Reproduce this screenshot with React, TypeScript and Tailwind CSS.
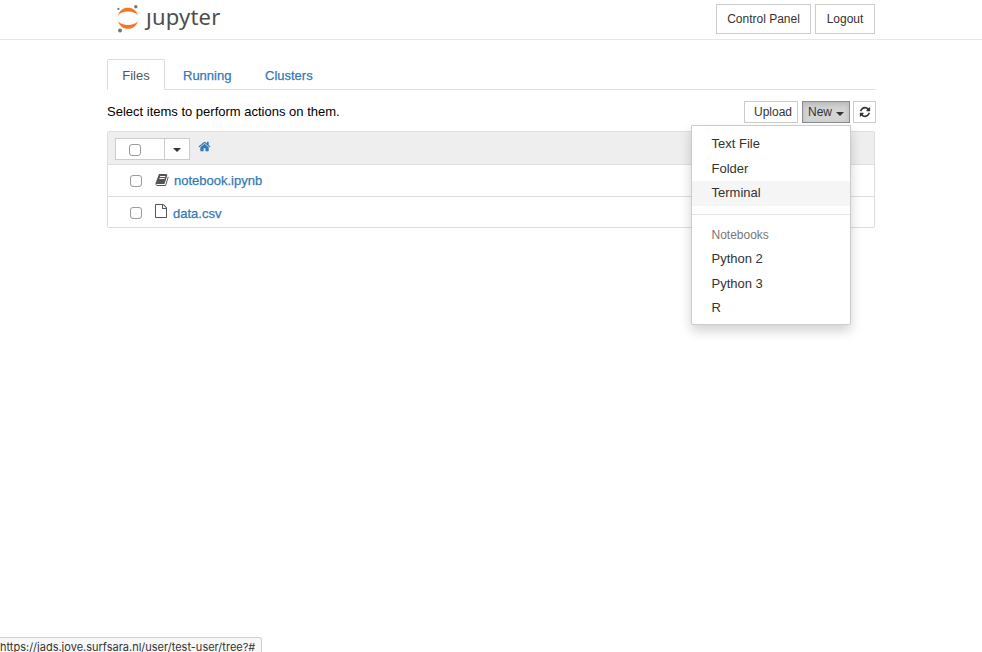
import type { ReactNode } from "react";

const REFRESH =
  "M1639 1056q0 5-1 7-64 268-268 434.5t-478 166.5q-146 0-282.5-55t-243.5-157l-129 129q-19 19-45 19t-45-19-19-45v-448q0-26 19-45t45-19h448q26 0 45 19t19 45-19 45l-137 137q71 66 161 102t187 36q134 0 250-65t186-179q11-17 53-117 8-23 30-23h192q13 0 22.5 9.5t9.5 22.5zm25-800v448q0 26-19 45t-45 19h-448q-26 0-45-19t-19-45 19-45l138-138q-148-137-349-137-134 0-250 65t-186 179q-11 17-53 117-8 23-30 23h-199q-13 0-22.5-9.5t-9.5-22.5v-7q65-268 270-434.5t480-166.5q146 0 284 55.5t245 156.5l130-129q19-19 45-19t45 19 19 45z";
const HOME =
  "M1472 992v480q0 26-19 45t-45 19h-384v-384h-256v384h-384q-26 0-45-19t-19-45v-480q0-1 .5-3t.5-3l575-474 575 474q1 2 1 6zm223-69l-62 74q-8 9-21 11h-3q-13 0-21-7l-692-577-692 577q-12 8-24 7-13-2-21-11l-62-74q-8-10-7-23.5t11-21.5l719-599q32-26 76-26t76 26l244 204v-195q0-14 9-23t23-9h192q14 0 23 9t9 23v408l219 182q10 8 11 21.5t-7 23.5z";
const BOOK =
  "M1703 478q40 57 18 129l-275 906q-19 64-76.5 107.5t-122.5 43.5h-923q-77 0-148.5-53.5t-99.5-131.5q-24-67-2-127 0-4 3-27t4-37q1-8-3-21.5t-3-19.5q2-11 8-21t16.5-23.5 16.5-23.5q23-38 45-91.5t30-91.5q3-10 .5-30t-.5-28q3-11 17-28t17-23q21-36 42-92t25-90q1-9-2.5-32t.5-28q4-13 22-30.5t22-22.5q19-26 42.5-84.5t27.5-96.5q1-8-3-25.5t-2-26.5q2-8 9-18t18-23 17-21q8-12 16.5-30.5t15-35 16-36 19.5-32 26.5-23.5 36-11.5 47.5 5.5l-1 3q38-9 51-9h761q74 0 114 56t18 130l-274 906q-36 119-71.5 153.5t-128.5 34.5h-869q-27 0-38 15-11 16-1 43 24 70 144 70h923q29 0 56-15.5t35-41.5l300-987q7-22 5-57 38 15 59 43zm-1064 2q-4 13 2 22.5t20 9.5h608q13 0 25.5-9.5t16.5-22.5l21-64q4-13-2-22.5t-20-9.5h-608q-13 0-25.5 9.5t-16.5 22.5zm-83 256q-4 13 2 22.5t20 9.5h608q13 0 25.5-9.5t16.5-22.5l21-64q4-13-2-22.5t-20-9.5h-608q-13 0-25.5 9.5t-16.5 22.5z";
const FILE =
  "M1596 380q28 28 48 76t20 88v1152q0 40-28 68t-68 28h-1344q-40 0-68-28t-28-68v-1600q0-40 28-68t68-28h896q40 0 88 20t76 48zm-444-244v376h376q-10-29-22-41l-313-313q-12-12-41-22zm384 1528v-1024h-416q-40 0-68-28t-28-68v-416h-768v1536h1280z";

function Icon({ path, className }: { path: string; className: string }) {
  return (
    <svg viewBox="0 0 1792 1792" fill="currentColor" className={className}>
      <path d={path} />
    </svg>
  );
}

function Caret({ className = "" }: { className?: string }) {
  return (
    <span
      className={`inline-block h-0 w-0 border-x-4 border-t-4 border-x-transparent border-t-[#333] ${className}`}
    />
  );
}

function Check({ className = "" }: { className?: string }) {
  return (
    <input
      type="checkbox"
      className={`block h-[12px] w-[12px] shrink-0 appearance-none rounded-[3px] border border-[#9a9a9a] bg-white ${className}`}
    />
  );
}

function Logo() {
  return (
    <div className="flex h-[39px] items-start pl-[9px]">
      <svg viewBox="0 0 24 29" className="mt-[4px] h-[29px] w-[24px]">
        <path d="M2 11.2C3.6 6.2 7.4 3.7 12 3.7s8.400 2.500 10 7.500C19.600 8.700 16 7.500 12 7.500S4.400 8.700 2 11.200z" fill="#f37726" />
        <path d="M2 17.200C3.600 22.200 7.400 24.800 12 24.800s8.400-2.600 10-7.600C19.600 19.700 16 20.900 12 20.900S4.400 19.700 2 17.200z" fill="#f37726" />
        <circle cx="19.800" cy="2.800" r="1.700" fill="#767677" />
        <circle cx="2.400" cy="4.900" r="1.100" fill="#767677" />
        <circle cx="4" cy="26.400" r="2" fill="#767677" />
      </svg>
      <div className="mt-[1px] ml-[6px] flex font-['Noto_Sans',sans-serif] text-[22px] leading-[30px] tracking-[0.2px] text-[#4e4e4e]">
        <span className="[clip-path:inset(11px_-4px_-4px_-6px)]">j</span>
        <span>upyter</span>
      </div>
    </div>
  );
}

function HeaderButton({ children, className }: { children: ReactNode; className: string }) {
  return (
    <button className={`h-[30px] border border-[#ccc] bg-white text-center text-[12px] text-[#333] ${className}`}>
      {children}
    </button>
  );
}

function MenuItem({ children, className = "" }: { children: ReactNode; className?: string }) {
  return <li className={`flex h-[24.500px] items-center pl-[19.500px] ${className}`}>{children}</li>;
}

function NewMenu() {
  return (
    <ul className="absolute top-[24px] right-[-1px] h-[200px] w-[160px] rounded-b-[2px] border border-[#ccc] bg-white pt-[6px] text-[13px] leading-[18px] text-[#333] shadow-[0_6px_12px_rgba(0,0,0,0.175)]">
      <MenuItem>Text File</MenuItem>
      <MenuItem>Folder</MenuItem>
      <MenuItem className="bg-[#f5f5f5]">Terminal</MenuItem>
      <li className="my-[8px] h-px bg-[#e5e5e5]" />
      <MenuItem className="text-[12px] text-[#777]">Notebooks</MenuItem>
      <MenuItem>Python 2</MenuItem>
      <MenuItem>Python 3</MenuItem>
      <MenuItem>R</MenuItem>
    </ul>
  );
}

export default function App() {
  return (
    <div className="flex h-[652px] flex-col overflow-hidden bg-white font-['Liberation_Sans',Arial,sans-serif] text-[13px] leading-[18px] text-black">
      <header className="h-[40px] shrink-0 border-b border-[#e7e7e7]">
        <div className="mx-auto flex w-[768px] justify-between">
          <Logo />
          <div className="flex gap-[4px] pt-[4px]">
            <HeaderButton className="w-[95px]">Control Panel</HeaderButton>
            <HeaderButton className="w-[60px]">Logout</HeaderButton>
          </div>
        </div>
      </header>

      <main className="mx-auto w-[768px] flex-1 pt-[19px]">
        <nav className="flex h-[31px] border-b border-[#ddd] leading-[18px] text-[#337ab7]">
          <a className="h-[31px] w-[58px] rounded-t-[2px] border border-b-0 border-[#ddd] bg-white pt-[7px] text-center text-[#555]">
            Files
          </a>
          <a className="ml-[2px] w-[82px] pt-[8px] pl-[16px] [-webkit-text-stroke:0.25px]">Running</a>
          <a className="pt-[8px] pl-[16px] [-webkit-text-stroke:0.25px]">Clusters</a>
        </nav>

        <div className="flex h-[41px] justify-between">
          <p className="pt-[13px] whitespace-nowrap">Select items to perform actions on them.</p>
          <div className="-mr-px flex pt-[11px] text-[12px] text-[#333]">
            <button className="h-[22px] w-[54px] border border-[#ccc] bg-white pl-[4px]">Upload</button>
            <div className="relative z-10 ml-[4px] w-[48px]">
              <button className="flex h-[22px] w-[48px] items-center border border-[#8c8c8c] bg-[#d4d4d4] pl-[5px] shadow-[inset_0_3px_5px_rgba(0,0,0,0.125)]">
                New
                <Caret className="mt-[3px] ml-[4px]" />
              </button>
              <NewMenu />
            </div>
            <button className="ml-[3px] flex h-[22px] w-[23px] items-center justify-center border border-[#ccc] bg-white">
              <Icon path={REFRESH} className="h-[12px] w-[12px]" />
            </button>
          </div>
        </div>

        <section className="h-[97px] rounded-[2px] border border-[#ddd]">
          <div className="flex h-[32px] bg-[#eee] pt-[6px] pl-[7px]">
            <div className="flex h-[22px] w-[75px] border border-[#ccc] bg-white">
              <div className="flex w-[49px] items-center border-r border-[#ccc] pl-[13px]">
                <Check className="mt-[2px]" />
              </div>
              <div className="flex flex-1 items-center justify-center">
                <Caret className="mt-[2px]" />
              </div>
            </div>
            <Icon path={HOME} className="mt-[2px] ml-[8px] h-[13px] w-[13px] text-[#337ab7]" />
          </div>
          <div className="flex h-[32px] border-t border-[#ddd] pl-[22px] text-[#337ab7]">
            <Check className="mt-[10px]" />
            <Icon path={BOOK} className="mt-[8px] ml-[13px] h-[14px] w-[14px] text-[#555]" />
            <a className="mt-[7px] ml-[5px] [-webkit-text-stroke:0.25px]">notebook.ipynb</a>
          </div>
          <div className="flex h-[31px] border-t border-[#ddd] pl-[22px] text-[#337ab7]">
            <Check className="mt-[10px]" />
            <Icon path={FILE} className="mt-[7px] ml-[12px] h-[14px] w-[14px] text-[#555]" />
            <a className="mt-[8px] ml-[5px] [-webkit-text-stroke:0.25px]">data.csv</a>
          </div>
        </section>
      </main>

      <footer className="h-[15px] w-[262px] shrink-0 overflow-hidden rounded-tr-[3px] border-t border-r border-[#d0d0d0] bg-[#f8f8f8] font-[Inter,sans-serif] text-[11px] leading-[18px] whitespace-nowrap text-[#333]">
        https://jads.jove.surfsara.nl/user/test-user/tree?#
      </footer>
    </div>
  );
}
